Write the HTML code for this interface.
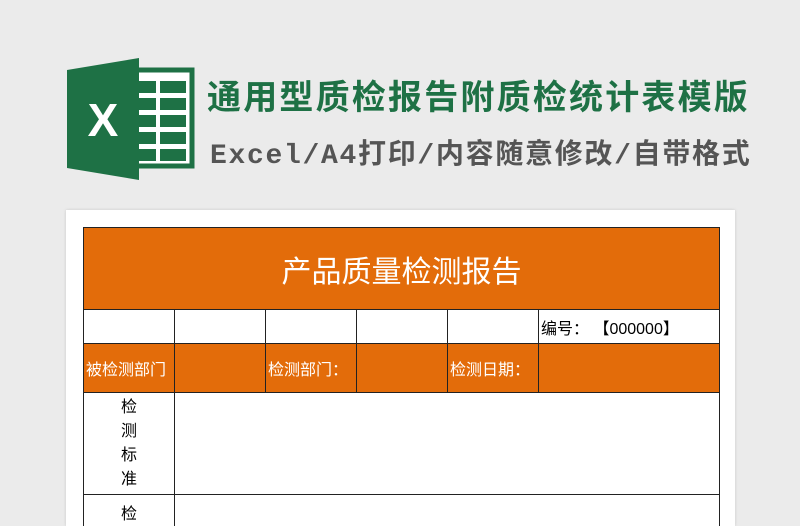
<!DOCTYPE html>
<html style="overflow:hidden;width:800px;height:526px"><head><meta charset="utf-8"><style>
*{margin:0;padding:0;box-sizing:border-box}
body{width:800px;height:526px;background:#ebebeb;position:relative;overflow:hidden;font-family:"Liberation Sans","Noto Sans CJK SC",sans-serif}
.a{position:absolute}
.t1{left:207px;top:70px;font-size:34px;font-weight:bold;color:#1e7145;white-space:nowrap;letter-spacing:2.2px}
.t2{left:210px;top:132px;font-size:28px;font-weight:bold;color:#555;white-space:nowrap;letter-spacing:1.7px;font-family:"Liberation Mono","Noto Sans CJK SC",monospace}
.paper{left:66px;top:210px;width:669px;height:316px;background:#fff;box-shadow:0 0 3px rgba(0,0,0,.15)}
.c{position:absolute;border:1.5px solid #222;font-size:15px;display:flex;align-items:center}
.o{background:#e36c0a;color:#fff}
</style></head><body>
<svg class="a" style="left:66px;top:56px" width="130" height="126" viewBox="0 0 130 126">
<rect x="62" y="14" width="64" height="96" fill="#fff" stroke="#1e7145" stroke-width="5"/>
<g fill="#1e7145">
<rect x="94" y="25" width="26" height="12"/><rect x="94" y="42" width="26" height="12"/><rect x="94" y="59" width="26" height="12"/><rect x="94" y="76" width="26" height="12"/><rect x="94" y="93" width="26" height="12"/>
<rect x="72" y="25" width="18" height="12"/><rect x="72" y="42" width="18" height="12"/><rect x="72" y="59" width="18" height="12"/><rect x="72" y="76" width="18" height="12"/><rect x="72" y="93" width="18" height="12"/>
</g>
<polygon points="1,14 73,2 73,124 1,112" fill="#1e7145"/>
<text x="37" y="80" font-family="Liberation Sans" font-weight="bold" font-size="46" fill="#fff" text-anchor="middle">X</text>
</svg>
<div class="a t1">通用型质检报告附质检统计表模版</div>
<div class="a t2">Excel/A4打印/内容随意修改/自带格式</div>
<div class="a paper"></div>
<div class="c o" style="left:83px;top:227px;width:637px;height:83px;justify-content:center;font-size:30px">产品质量检测报告</div>
<div class="c" style="left:83px;top:309px;width:92px;height:35px"></div>
<div class="c" style="left:174px;top:309px;width:92px;height:35px"></div>
<div class="c" style="left:265px;top:309px;width:92px;height:35px"></div>
<div class="c" style="left:356px;top:309px;width:92px;height:35px"></div>
<div class="c" style="left:447px;top:309px;width:92px;height:35px"></div>
<div class="c" style="left:538px;top:309px;width:182px;height:35px;padding-left:2px;font-size:16px">编号：&nbsp;【000000】</div>
<div class="c o" style="left:83px;top:343px;width:92px;height:50px;padding-left:2px;font-size:16px">被检测部门</div>
<div class="c o" style="left:174px;top:343px;width:92px;height:50px"></div>
<div class="c o" style="left:265px;top:343px;width:92px;height:50px;padding-left:2px;font-size:16px">检测部门：</div>
<div class="c o" style="left:356px;top:343px;width:92px;height:50px"></div>
<div class="c o" style="left:447px;top:343px;width:92px;height:50px;padding-left:2px;font-size:16px">检测日期：</div>
<div class="c o" style="left:538px;top:343px;width:182px;height:50px"></div>
<div class="c" style="left:83px;top:392px;width:92px;height:103px;justify-content:center;line-height:24px;text-align:center;font-size:16px">检<br>测<br>标<br>准</div>
<div class="c" style="left:174px;top:392px;width:546px;height:103px"></div>
<div class="c" style="left:83px;top:494px;width:92px;height:34px;justify-content:center;align-items:flex-start;padding-top:5px;font-size:16px;border-bottom:none">检</div>
<div class="c" style="left:174px;top:494px;width:546px;height:34px;border-bottom:none"></div>
</body></html>
